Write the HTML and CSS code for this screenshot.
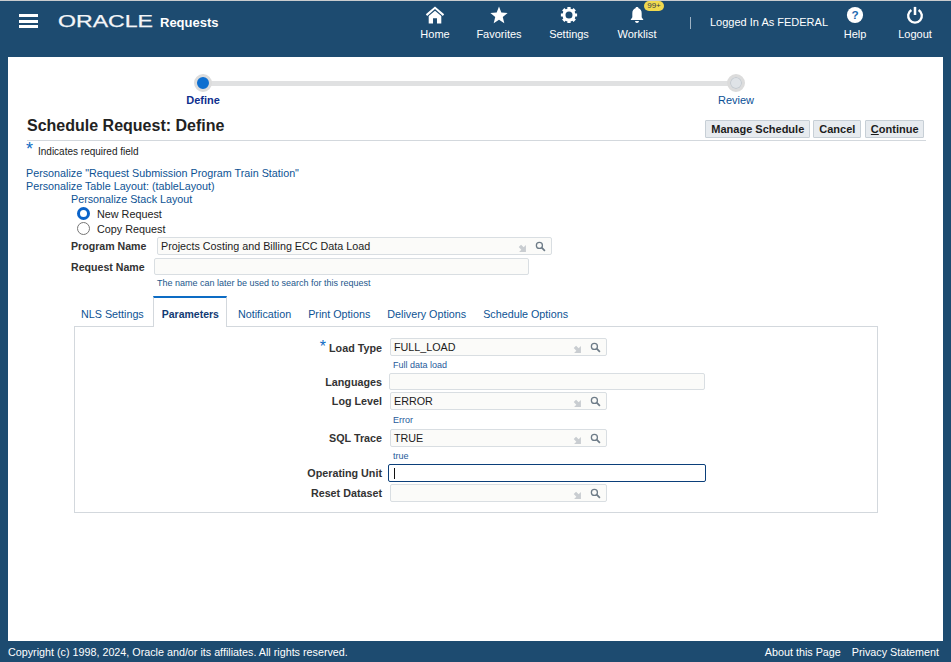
FILE: index.html
```html
<!DOCTYPE html>
<html lang="en">
<head>
<meta charset="utf-8">
<title>Schedule Request: Define</title>
<link rel="stylesheet" href="styles.css">
</head>
<body>
<svg class="defs" width="0" height="0" aria-hidden="true">
  <symbol id="lov" viewBox="0 0 10 10"><path d="M8.8 1.2V8.8H1.2L3.7 6.3 .8 3.4 3.4 .8 6.3 3.7Z" fill="#c9cdd1"/></symbol>
  <symbol id="search" viewBox="0 0 12 12"><circle cx="4.8" cy="4.8" r="3.3" fill="none" stroke="#6d7b87" stroke-width="1.4"/><path d="M7.3 7.3L10.8 10.8" stroke="#6d7b87" stroke-width="1.9"/></symbol>
</svg>
<header class="topbar">
  <button class="menu" aria-label="Menu"><i></i><i></i><i></i></button>
  <svg class="logo" width="97" height="20" viewBox="0 0 97 20"><text x="0" y="15" textLength="95" lengthAdjust="spacingAndGlyphs">ORACLE</text></svg>
  <span class="apptitle">Requests</span>
  <nav class="nav">
    <a class="navitem home">
      <svg width="20" height="18" viewBox="0 0 22 20"><path d="M11 .5L.8 9.3 2.3 11 11 3.4 19.7 11 21.2 9.3Z" fill="#fff"/><path d="M4 11.2L11 5.2 18 11.2V19.5H13.2V13.5H8.8V19.5H4Z" fill="#fff"/></svg>
      <span>Home</span>
    </a>
    <a class="navitem fav">
      <svg width="18" height="18" viewBox="0 0 20 20"><path d="M10 .6L12.6 7.2 19.6 7.7 14.2 12.2 15.9 19.2 10 15.4 4.1 19.2 5.8 12.2 .4 7.7 7.4 7.2Z" fill="#fff"/></svg>
      <span>Favorites</span>
    </a>
    <a class="navitem set">
      <svg width="18" height="18" viewBox="0 0 20 20"><circle cx="10" cy="10" r="5.6" fill="none" stroke="#fff" stroke-width="3.4"/><path d="M10 1V4M10 16V19M1 10H4M16 10H19M3.6 3.6L5.8 5.8M14.2 14.2L16.4 16.4M16.4 3.6L14.2 5.8M5.8 14.2L3.6 16.4" stroke="#fff" stroke-width="3.6"/></svg>
      <span>Settings</span>
    </a>
    <a class="navitem work">
      <svg width="18" height="18" viewBox="0 0 20 20"><path d="M10 1.2C11 1.2 11.6 1.8 11.7 2.6 14.2 3.4 15.2 5.5 15.2 8.2V12.6L17.2 15.6H2.8L4.8 12.6V8.2C4.8 5.5 5.8 3.4 8.3 2.6 8.4 1.8 9 1.2 10 1.2Z" fill="#fff"/><path d="M7.8 16.6H12.2C12 18 11.2 18.8 10 18.8S8 18 7.8 16.6Z" fill="#fff"/></svg>
      <span>Worklist</span>
      <b class="badge">99+</b>
    </a>
    <span class="divider"></span>
    <span class="user">Logged In As FEDERAL</span>
    <a class="navitem help">
      <svg width="18" height="18" viewBox="0 0 20 20"><circle cx="10" cy="10" r="9" fill="#fff"/><text x="10" y="14.5" text-anchor="middle" class="q">?</text></svg>
      <span>Help</span>
    </a>
    <a class="navitem logout">
      <svg width="18" height="18" viewBox="0 0 20 20"><path d="M6 4.4A7.6 7.6 0 1 0 14 4.4" fill="none" stroke="#fff" stroke-width="2.6"/><path d="M10 1V10" stroke="#fff" stroke-width="2.8"/></svg>
      <span>Logout</span>
    </a>
  </nav>
</header>

<main class="panel">
  <div class="train">
    <div class="track"></div>
    <div class="stops">
      <div class="stop current"><span class="dot"></span><span class="stoplabel">Define</span></div>
      <div class="stop"><span class="dot"></span><span class="stoplabel">Review</span></div>
    </div>
  </div>

  <div class="titlebar">
    <h1>Schedule Request: Define</h1>
    <div class="actions">
      <button class="btn">Manage Schedule</button>
      <button class="btn">Cancel</button>
      <button class="btn"><u>C</u>ontinue</button>
    </div>
  </div>

  <p class="required"><span class="star">*</span>Indicates required field</p>

  <div class="links">
    <a>Personalize "Request Submission Program Train Station"</a>
    <a>Personalize Table Layout: (tableLayout)</a>
  </div>

  <div class="stack">
    <a>Personalize Stack Layout</a>
    <label class="radio"><span class="rb on"></span>New Request</label>
    <label class="radio"><span class="rb"></span>Copy Request</label>
    <div class="toprow">
      <span class="lbl">Program Name</span>
      <div class="field prog"><span>Projects Costing and Billing ECC Data Load</span><svg class="i1"><use href="#lov"/></svg><svg class="i2"><use href="#search"/></svg></div>
    </div>
    <div class="toprow second">
      <span class="lbl short">Request Name</span>
      <div class="field reqname"></div>
    </div>
    <p class="tophint">The name can later be used to search for this request</p>
  </div>

  <div class="tabs">
    <a class="tab">NLS Settings</a>
    <a class="tab active">Parameters</a>
    <a class="tab">Notification</a>
    <a class="tab">Print Options</a>
    <a class="tab">Delivery Options</a>
    <a class="tab">Schedule Options</a>
  </div>
  <section class="params">
    <div class="prow r1"><span class="plbl"><span class="star small">*</span>Load Type</span><div class="field lov"><span>FULL_LOAD</span><svg class="i1"><use href="#lov"/></svg><svg class="i2"><use href="#search"/></svg></div></div>
    <p class="phint h1">Full data load</p>
    <div class="prow r2"><span class="plbl">Languages</span><div class="field wide"></div></div>
    <div class="prow r3"><span class="plbl">Log Level</span><div class="field lov"><span>ERROR</span><svg class="i1"><use href="#lov"/></svg><svg class="i2"><use href="#search"/></svg></div></div>
    <p class="phint h2">Error</p>
    <div class="prow r4"><span class="plbl">SQL Trace</span><div class="field lov"><span>TRUE</span><svg class="i1"><use href="#lov"/></svg><svg class="i2"><use href="#search"/></svg></div></div>
    <p class="phint h3">true</p>
    <div class="prow r5"><span class="plbl">Operating Unit</span><div class="field focus"><span class="caret"></span></div></div>
    <div class="prow r6"><span class="plbl">Reset Dataset</span><div class="field lov"><span></span><svg class="i1"><use href="#lov"/></svg><svg class="i2"><use href="#search"/></svg></div></div>
  </section>
</main>

<footer class="footer">
  <span>Copyright (c) 1998, 2024, Oracle and/or its affiliates. All rights reserved.</span>
  <span class="flinks"><a>About this Page</a><a>Privacy Statement</a></span>
</footer>
</body>
</html>
```

FILE: styles.css
```css
* { box-sizing: border-box; }
html, body { margin: 0; padding: 0; }
body {
  width: 951px;
  height: 662px;
  overflow: hidden;
  background: #1d4b70;
  font-family: "Liberation Sans", Arial, sans-serif;
  font-size: 12px;
  color: #222;
  display: flex;
  flex-direction: column;
  border-top: 1px solid #c9ccce;
}
.defs { display: block; height: 0; }
p, h1 { margin: 0; }
a { color: #0d5394; }

/* Header */
.topbar {
  height: 56px;
  display: flex;
  align-items: flex-start;
  color: #fff;
  flex: none;
}
.menu {
  width: 19px;
  height: 14px;
  margin: 13px 0 0 19px;
  padding: 0;
  border: 0;
  background: none;
  display: flex;
  flex-direction: column;
  justify-content: space-between;
}
.menu i { display: block; height: 3px; background: #fff; }
.logo { margin: 11px 0 0 20px; flex: none; }
.logo text { font: 400 16.5px "Liberation Sans", Arial, sans-serif; fill: #f4f6f8; stroke: #f4f6f8; stroke-width: .25; }
.apptitle { font-size: 13px; font-weight: 700; margin: 14px 0 0 5px; }
.nav { margin-left: auto; display: flex; align-items: flex-start; height: 100%; position: relative; }
.navitem {
  display: flex;
  flex-direction: column;
  align-items: center;
  color: #fff;
  font-size: 11px;
  position: relative;
  padding-top: 5px;
}
.navitem svg { display: block; margin-bottom: 3px; }
.navitem span { line-height: 14px; }
.navitem.home { width: 30px; margin-right: 26px; }
.navitem.fav { width: 46px; margin-right: 27px; }
.navitem.set { width: 40px; margin-right: 28px; }
.navitem.work { width: 40px; }
.badge {
  position: absolute;
  top: 0;
  left: 27px;
  width: 20px;
  height: 10px;
  border-radius: 5px;
  background: #f0d94f;
  color: #33404a;
  font-size: 8px;
  font-weight: 400;
  line-height: 10px;
  text-align: center;
}
.divider { width: 1px; height: 12px; background: #9fb3c4; margin: 16px 19px 0 33px; }
.user { font-size: 11px; margin-top: 15px; width: 118px; white-space: nowrap; }
.navitem.help { width: 26px; margin-left: 14px; }
.navitem.logout { width: 36px; margin-left: 29px; margin-right: 18px; }
.q { font: 700 13px "Liberation Sans", Arial, sans-serif; fill: #1d6ab0; }

/* Panel */
.panel {
  flex: none;
  height: 584px;
  margin: 0 8px;
  background: #fff;
  padding-top: 17px;
}

/* Train */
.train { position: relative; height: 36px; margin-left: 176px; width: 571px; }
.track {
  position: absolute;
  left: 19px;
  right: 19px;
  top: 7px;
  height: 5px;
  background: #e0e1e2;
}
.stops { display: flex; justify-content: space-between; position: relative; }
.stop { width: 38px; display: flex; flex-direction: column; align-items: center; }
.dot {
  width: 18px;
  height: 18px;
  border-radius: 50%;
  background: #dfe3e7;
  border: 3px solid #dcdcdc;
  box-shadow: inset 0 0 0 1px #c4cad0;
}
.stop.current .dot { background: #0e6fd0; box-shadow: none; }
.stoplabel { font-size: 11px; line-height: 13px; margin-top: 2px; color: #0a4f96; white-space: nowrap; }
.stop.current .stoplabel { color: #0e2f8e; font-weight: 700; }

/* Title */
.titlebar {
  margin: 4px 17px 0 19px;
  height: 27px;
  padding-top: 2px;
  border-bottom: 1px solid #d3d8dd;
  display: flex;
  justify-content: space-between;
}
h1 { font-size: 16px; line-height: 20px; font-weight: 700; color: #222; }
.actions { display: flex; gap: 3px; margin: 4px 2px 0 0; height: 18px; }
.btn {
  height: 18px;
  padding: 0 5px;
  font: 700 11px "Liberation Sans", Arial, sans-serif;
  color: #1c1c1c;
  background: #e7ebef;
  border: 1px solid #c7cfd6;
  border-radius: 1px;
  margin: 0;
  white-space: nowrap;
}
.btn:nth-child(3) { margin-left: 1px; padding: 0 4.5px; }

.required { margin: 2px 0 0 18px; font-size: 10px; line-height: 18px; display: flex; }
.star { color: #0d6cc4; font-size: 18px; line-height: 14px; width: 12px; font-weight: 400; }
.required .star { margin-top: -1px; }

.links { margin: 6px 0 0 18px; display: flex; flex-direction: column; font-size: 10.75px; line-height: 13px; }
.stack { margin-left: 63px; font-size: 10.75px; }
.stack > a { display: block; line-height: 13px; }
.radio { display: flex; align-items: center; height: 15px; margin: 0 0 0 6px; font-size: 10.8px; }
.rb {
  width: 13px;
  height: 13px;
  border-radius: 50%;
  border: 1px solid #767676;
  margin-right: 7px;
  background: #fff;
  flex: none;
}
.rb.on { border: 3.5px solid #0a63c9; }

.toprow { display: flex; align-items: center; height: 18px; margin-top: 1px; }
.toprow.second { margin-top: 3px; height: 17px; }
.lbl { width: 86px; font-weight: 700; font-size: 10.6px; color: #333; white-space: nowrap; }
.lbl.short { width: 83px; }

.field {
  display: flex;
  align-items: center;
  height: 18px;
  border: 1px solid #d9dee2;
  border-radius: 2px;
  background: #fbfbf9;
  padding-left: 3px;
  font-size: 10.75px;
  color: #1c1c1c;
}
.field span { flex: 1; }
.field svg { flex: none; }
.field .i1 { width: 9px; height: 9px; margin: 4px 8px 0 0; }
.field .i2 { width: 11px; height: 11px; margin: 0 5px 0 0; }
.field.prog { width: 395px; }
.field.reqname { width: 375px; height: 17px; }
.tophint { font-size: 9px; line-height: 12px; margin: 2px 0 0 86px; color: #24578c; }

/* Tabs */
.tabs { display: flex; margin: 7px 0 0 66px; height: 30px; align-items: stretch; position: relative; }
.tab {
  font-size: 10.75px;
  padding: 12px 7px 0;
  margin-right: 3px;
  white-space: nowrap;
  color: #0d5394;
}
.tab.active {
  margin: 0 4px 0 -1px;
  border: 1px solid #d3d8dd;
  border-top: 2px solid #0d6cc4;
  border-bottom: 0;
  background: #fff;
  color: #123a73;
  font-weight: 700;
  font-size: 10.5px;
  padding: 10px 7px 0 8px;
  height: 31px;
  z-index: 1;
}
.params {
  margin-left: 66px;
  width: 804px;
  height: 187px;
  border: 1px solid #d3d8dd;
  padding-top: 11px;
  display: flex;
  flex-direction: column;
}
.prow { display: flex; align-items: center; height: 18px; }
.plbl { width: 315px; text-align: right; font-weight: 700; font-size: 10.75px; color: #333; padding-right: 8px; white-space: nowrap; }
.field.lov { width: 217px; margin-left: 0; }
.field.wide { width: 316px; margin-left: -1px; height: 17px; }
.field.focus {
  width: 318px;
  margin-left: -2px;
  border: 1px solid #0b3f7a;
  background: #fff;
  padding-left: 5px;
}
.caret { flex: none !important; width: 1px; height: 11px; background: #111; }
.small { font-size: 16px; margin-right: 3px; }
.phint { font-size: 9px; line-height: 11px; margin-left: 318px; color: #1f5a9b; }
.h1 { margin-top: 4px; height: 13px; }
.r2 { height: 17px; margin-top: 0; }
.r3 { margin-top: 2px; }
.h2 { margin-top: 5px; height: 14px; }
.h3 { margin-top: 4px; height: 13px; }
.r5 { margin-top: 0; }
.r6 { margin-top: 2px; }

/* Footer */
.footer {
  flex: none;
  height: 21px;
  display: flex;
  justify-content: space-between;
  align-items: center;
  padding: 0 12px 0 8px;
  color: #fff;
  font-size: 10.75px;
}
.flinks { display: flex; gap: 11px; }
.flinks a { color: #fff; }
```
